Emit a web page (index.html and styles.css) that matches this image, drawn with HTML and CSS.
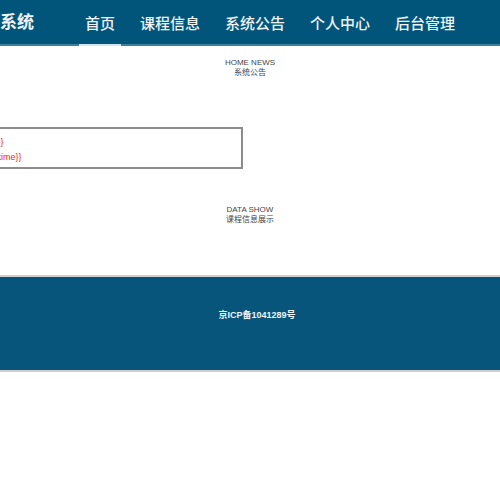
FILE: index.html
```html
<!DOCTYPE html>
<html lang="zh-CN">
<head>
  <meta charset="UTF-8">
  <title>系统首页</title>
  <link rel="stylesheet" href="styles.css">
</head>
<body>
  <div id="header">
    <div class="logo">系统</div>
    <ul class="nav">
      <li><a class="active" href="#">首页</a></li>
      <li><a href="#">课程信息</a></li>
      <li><a href="#">系统公告</a></li>
      <li><a href="#">个人中心</a></li>
      <li><a href="#">后台管理</a></li>
    </ul>
  </div>

  <div id="main">
    <!-- News -->
    <div class="section-title news-title">
      <div class="en">HOME NEWS</div>
      <div class="cn">系统公告</div>
    </div>
    <ul class="news-list">
      <li class="news-item">
        <div>{{item.title}}</div>
        <div>{{item.addtime}}</div>
      </li>
    </ul>

    <!-- Courses -->
    <div class="section-title data-title">
      <div class="en">DATA SHOW</div>
      <div class="cn">课程信息展示</div>
    </div>
  </div>

  <div id="footer">
    <p>京ICP备1041289号</p>
  </div>
</body>
</html>
```

FILE: styles.css
```css
html, body {
  margin: 0;
  padding: 0;
  background: #fff;
  font-family: "Liberation Sans", "Noto Sans CJK SC", sans-serif;
}
#header {
  display: flex;
  align-items: stretch;
  height: 44px;
  background: #02557a;
  border-bottom: 2px solid #3d7f9f;
  color: #eef3f6;
  font-family: "Noto Sans CJK SC", sans-serif;
}
.logo {
  display: flex;
  align-items: center;
  font-size: 17px;
  font-weight: bold;
  line-height: 1;
  padding-bottom: 3px;
  box-sizing: border-box;
}
.nav {
  display: flex;
  gap: 13px;
  list-style: none;
  margin: 0 0 0 45px;
  padding: 0;
}
.nav li {
  display: flex;
  margin-bottom: -2px;
}
.nav a {
  display: flex;
  align-items: center;
  padding: 0 6px;
  font-size: 15px;
  font-weight: 500;
  color: #eef3f6;
  text-decoration: none;
  border-bottom: 2px solid transparent;
}
.nav a.active {
  border-bottom-color: #cfe5f1;
}
#main {
  padding-top: 12px;
}
.section-title {
  text-align: center;
  color: #444;
  font-size: 8px;
  line-height: 10px;
}
.news-list {
  list-style: none;
  margin: 49px 0 0 -57px;
  padding: 0;
}
.news-item {
  box-sizing: border-box;
  width: 300px;
  border: 2px solid #8c8c8c;
  padding: 6px 8px 2px 13px;
  color: #f0282d;
  font-size: 9px;
  line-height: 15px;
}
.data-title {
  margin-top: 36px;
}
#footer {
  margin-top: 50px;
  height: 93px;
  background: #07557b;
  border-top: 2px solid #cfcfcf;
  border-bottom: 2px solid #cfcfcf;
  text-align: center;
}
#footer p {
  margin: 0;
  padding: 31px 0 0 14px;
  color: #eef3f6;
  font-size: 9px;
  font-weight: bold;
}
```
